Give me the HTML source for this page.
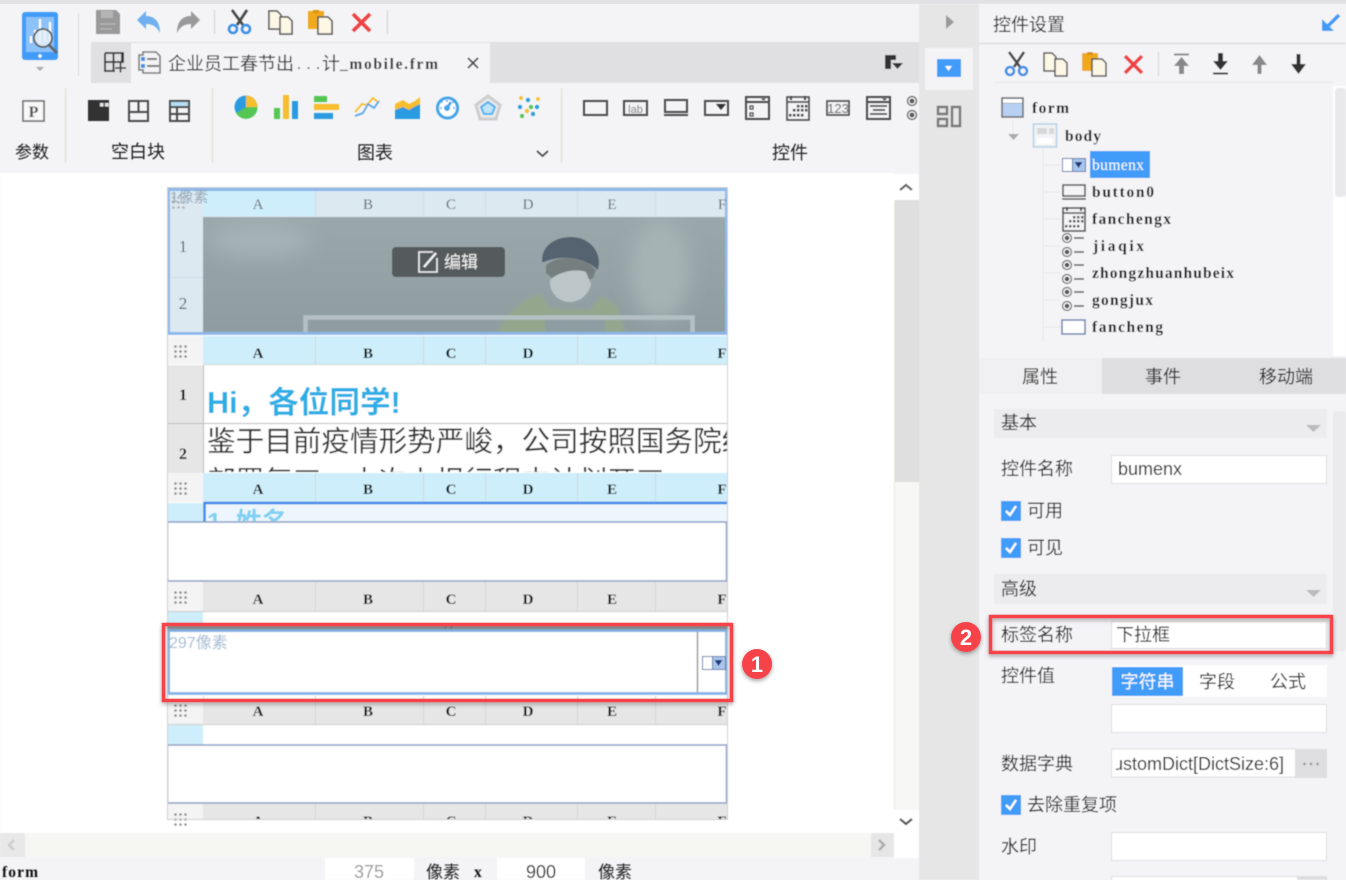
<!DOCTYPE html>
<html><head><meta charset="utf-8"><title>控件设置</title>
<style>
html,body{margin:0;padding:0;width:1346px;height:880px;overflow:hidden;background:#f4f4f7}
svg{display:block;position:absolute;left:0;top:0}
text{font-family:"Liberation Sans","Noto Sans CJK SC",sans-serif;fill:#222;font-size:16px}
.m{font-family:"Liberation Serif","Noto Sans CJK SC",serif;font-size:15.500px;fill:#111;font-weight:bold}
.h{font-family:"Liberation Serif",serif;font-size:15px;font-weight:bold;fill:#111;text-anchor:middle}
.c{text-anchor:middle}
.ic{fill:none;stroke:#4c4c4c;stroke-width:2}
</style></head><body>
<svg width="1346" height="880" viewBox="0 0 1346 880" xmlns="http://www.w3.org/2000/svg">
<defs>
<filter id="sh" x="-10%" y="-20%" width="120%" height="140%"><feDropShadow dx="0" dy="2" stdDeviation="2" flood-color="#000" flood-opacity=".35"/></filter>
<filter id="b" x="-5%" y="-5%" width="110%" height="110%"><feGaussianBlur stdDeviation=".45"/></filter>
<filter id="b2" x="-20%" y="-20%" width="140%" height="140%"><feGaussianBlur stdDeviation="1.6"/></filter>
<filter id="b3" x="-50%" y="-50%" width="200%" height="200%"><feGaussianBlur stdDeviation="9"/></filter>
<linearGradient id="fog" x1="0" y1="0" x2="0" y2="1"><stop offset="0" stop-color="#9aa8ac"/><stop offset="1" stop-color="#8f9da1"/></linearGradient>
<clipPath id="c1"><rect x="203" y="217" width="523" height="116"/></clipPath>
<clipPath id="c2"><rect x="203" y="365" width="525" height="107"/></clipPath>
<clipPath id="c3"><rect x="205" y="504" width="523" height="17"/></clipPath>
<clipPath id="c4"><rect x="167" y="805" width="561" height="15"/></clipPath>
<clipPath id="c5"><rect x="1116" y="750" width="178" height="28"/></clipPath>
<clipPath id="c6"><rect x="167" y="187" width="561" height="640"/></clipPath>
<g id="sc"><path d="M10 15L20 0M16 15L5 0" stroke="#454545" stroke-width="2.6" fill="none"/><circle cx="6" cy="19" r="4" fill="none" stroke="#3d8fe6" stroke-width="2.6"/><circle cx="19" cy="19" r="4" fill="none" stroke="#3d8fe6" stroke-width="2.6"/></g>
<g id="cp"><path d="M1 1h8l4 4v14H1z" fill="#fdf7e6" stroke="#555" stroke-width="1.5"/><path d="M12 7h8l4 4v13H12z" fill="#fdf7e6" stroke="#555" stroke-width="1.5"/></g>
<g id="pa"><rect x="0" y="1" width="16" height="18" fill="#f0a81e"/><rect x="5" y="0" width="6" height="3" fill="#d9920c"/><path d="M10 7h10l4 4v13H10z" fill="#fdf7e6" stroke="#555" stroke-width="1.5"/></g>
<path id="xx" d="M1 1L18 18M18 1L1 18" stroke="#ee4343" stroke-width="3.6" fill="none"/>
<g id="rd"><circle cx="5" cy="5" r="4.5" fill="none" stroke="#666" stroke-width="1.2"/><circle cx="5" cy="5" r="2.3" fill="#555"/></g>
<g id="ck"><rect width="20" height="20" fill="#3f9bf9"/><path d="M5 10l4 4 6-9" stroke="#fff" stroke-width="2.4" fill="none"/></g>
<g id="dd"><rect x=".5" y=".5" width="23" height="13" fill="#fff" stroke="#5a76a8"/><rect x="10" y="1" width="13" height="12" fill="#a9c6ec"/><path d="M10.5 1v12" stroke="#5a76a8"/><path d="M12.5 4h8l-4 6z" fill="#1e3a7c"/></g>
<g id="gp"><g fill="#8a8a8a"><circle cx="1.5" cy="1.5" r="1.3"/><circle cx="6.5" cy="1.5" r="1.3"/><circle cx="11.5" cy="1.5" r="1.3"/><circle cx="1.5" cy="6.5" r="1.3"/><circle cx="6.5" cy="6.5" r="1.3"/><circle cx="11.5" cy="6.5" r="1.3"/><circle cx="1.5" cy="11.5" r="1.3"/><circle cx="6.5" cy="11.5" r="1.3"/><circle cx="11.5" cy="11.5" r="1.3"/></g></g>
<g id="cal"><rect x="1" y="1" width="22" height="23" fill="none" stroke="#4c4c4c" stroke-width="1.6"/><path d="M1 6h22" stroke="#4c4c4c" stroke-width="1.6"/><path d="M5 0v4M19 0v4" stroke="#4c4c4c" stroke-width="2"/><g fill="#4c4c4c"><rect x="11" y="9" width="2.4" height="2.4"/><rect x="15" y="9" width="2.4" height="2.4"/><rect x="19" y="9" width="2.4" height="2.4"/><rect x="7" y="13" width="2.4" height="2.4"/><rect x="11" y="13" width="2.4" height="2.4"/><rect x="15" y="13" width="2.4" height="2.4"/><rect x="19" y="13" width="2.4" height="2.4"/><rect x="3" y="18" width="2.4" height="2.4"/><rect x="7" y="18" width="2.4" height="2.4"/><rect x="11" y="18" width="2.4" height="2.4"/><rect x="15" y="18" width="2.4" height="2.4"/></g></g>
</defs>

<!-- base -->
<rect width="1346" height="880" fill="#f4f4f7"/>
<rect width="1346" height="4" fill="#e2e2e4"/>

<g filter="url(#b)">
<!-- tab bar -->
<rect x="91" y="42" width="828" height="41" fill="#e0e0e2"/>
<rect x="131" y="43" width="359" height="40" fill="#f4f4f7"/>
<path d="M105 53h18v10M105 53v18h10M113.500 53v18M105 62h18M122 53v9" fill="none" stroke="#333" stroke-width="1.8"/>
<path d="M115 68h11M120.500 62.500v10" fill="none" stroke="#333" stroke-width="1.6"/>
<path d="M143 52h13l4 4v17h-17v-3h-4V55h4z" fill="#f4f4f7" stroke="#777" stroke-width="1.6"/><rect x="141" y="57" width="4" height="4" fill="#3f8fe6"/><rect x="141" y="64" width="4" height="4" fill="#3f8fe6"/><path d="M147 59h10M147 66h12" stroke="#777" stroke-width="2"/>
<text x="168" y="70" style="font-size:18px;fill:#333">企业员工春节出</text>
<text x="297" y="69" class="m" textLength="23" lengthAdjust="spacing" style="font-weight:normal;fill:#333">...</text>
<text x="322" y="70" style="font-size:18px;fill:#333">计</text>
<text x="340" y="69" class="m" textLength="98" lengthAdjust="spacing" style="fill:#333">_mobile.frm</text>
<path d="M468 58l10 10M478 58l-10 10" stroke="#444" stroke-width="1.8"/>
<path d="M885 55h11v5h-5v9h-6z" fill="#333"/><path d="M892 63h11l-5.500 6z" fill="#333"/>

<!-- logo -->
<rect x="22" y="12" width="36" height="48" rx="3" fill="#3f9bf9"/>
<rect x="26" y="17" width="28" height="35" fill="#8cc2f8"/>
<path d="M31 36v7M35 30v13M40 19v24M45 28v14M50 22v20" stroke="#fff" stroke-width="2.200"/>
<circle cx="40" cy="56" r="1.8" fill="#fff"/>
<circle cx="43" cy="38" r="9" fill="#e8f0f8" fill-opacity=".8" stroke="#555" stroke-width="1.8"/>
<path d="M49 45l8 8" stroke="#666" stroke-width="3"/>
<path d="M36 67h8l-4 4z" fill="#aaa"/>
<path d="M78.500 13v63" stroke="#dcdcd8"/>

<!-- quick toolbar -->
<path d="M96 10h20l4 4v20H96z" fill="#999"/><rect x="101" y="11" width="12" height="7" fill="#b5b5b5"/><path d="M100 24h16M100 29h12" stroke="#b5b5b5" stroke-width="1.5"/>
<path d="M137 20l9-9v5c9 0 14 6 14 17-3-6-7-9-14-9v5z" fill="#6fb0ee"/>
<path d="M200 20l-9-9v5c-9 0-14 6-14 17 3-6 7-9 14-9v5z" fill="#999"/>
<path d="M214.500 10v24M387.500 10v24" stroke="#d8d8d8" stroke-width="1.4"/>
<use href="#sc" x="227" y="10"/><use href="#cp" x="268" y="10"/><use href="#pa" x="308" y="10"/><use href="#xx" x="352" y="13"/>

<!-- ribbon -->
<rect x="23" y="101" width="21" height="20" fill="#f8f8f8" stroke="#666" stroke-width="1.5"/>
<text x="33.500" y="117" class="c" style="font-family:'Liberation Serif',serif;font-weight:bold;font-size:16px;fill:#555">P</text>
<path d="M65.500 88v75M212.500 88v75M561.500 88v75" stroke="#e8e6dc" stroke-width="2"/>
<rect x="88" y="100" width="21" height="21" fill="#333"/><rect x="100" y="103" width="3.500" height="3.500" fill="#e4e4e4"/><rect x="105" y="103" width="3.500" height="3.500" fill="#e4e4e4"/>
<path d="M129 101h19v20h-19zM129 112h19M138.500 101v11" class="ic"/>
<rect x="170" y="101" width="19" height="6" fill="#b5dff5"/><path d="M170 101h19v20h-19zM170 107h19M177 107v14M170 114h19" class="ic"/>
<text x="32" y="158" class="c" style="font-size:17px">参数</text>
<text x="138" y="158" class="c" style="font-size:18px">空白块</text>
<text x="375" y="159" class="c" style="font-size:18px">图表</text>
<text x="790" y="159" class="c" style="font-size:18px">控件</text>
<path d="M537 151l5.500 5 5.500-5" fill="none" stroke="#444" stroke-width="1.6"/>

<!-- charts -->
<circle cx="246" cy="107" r="11.500" fill="#2a9be0"/>
<path d="M246 107V95.500A11.500 11.500 0 0 1 257.500 107z" fill="#f8bd2d"/>
<path d="M246 107h11.500A11.500 11.500 0 0 1 236 113z" fill="#53c653"/>
<rect x="274" y="108" width="6" height="11" fill="#53c653"/><rect x="283" y="95" width="6" height="24" fill="#f8bd2d"/><rect x="292" y="101" width="6" height="18" fill="#2a9be0"/>
<rect x="314" y="96" width="13" height="6" fill="#53c653"/><rect x="314" y="104" width="25" height="6" fill="#f8bd2d"/><rect x="314" y="113" width="19" height="6" fill="#2a9be0"/>
<path d="M355 112l7-8 5 1 6-7 5 4" fill="none" stroke="#f8bd2d" stroke-width="1.8"/><path d="M355 116l8-3 5-9 6 4 5-7" fill="none" stroke="#5aa8e8" stroke-width="1.8"/>
<path d="M395 104l8-4 6 4 6-3 5-4v22h-25z" fill="#f8bd2d"/><path d="M395 110l8-3 6 3 5-3 6-3v15h-25z" fill="#2a9be0"/>
<circle cx="447.500" cy="108" r="10" fill="#fff" stroke="#3fa4ea" stroke-width="3"/><path d="M447 108l4-6" stroke="#3fa4ea" stroke-width="2.800"/><circle cx="447" cy="108" r="3" fill="#3fa4ea"/><path d="M441 101l1.500 1.500M454 101l-1.500 1.500M440 108h2M455 108h-2M447 100v2" stroke="#3fa4ea" stroke-width="1.600"/>
<path d="M488 96l12 9-4 14h-16l-4-14z" fill="#ececee" stroke="#cdcdcd" stroke-width="3"/><path d="M488 102l7 5-3 7h-8l-3-7z" fill="#bfe3f8" stroke="#4fb0ea" stroke-width="2"/>
<g><circle cx="521" cy="98" r="1.900" fill="#f8bd2d"/><circle cx="528" cy="100" r="2.100" fill="#2a9be0"/><circle cx="538" cy="99" r="1.900" fill="#f8bd2d"/><circle cx="520" cy="107" r="2.100" fill="#2a9be0"/><circle cx="531" cy="107" r="2.100" fill="#53c653"/><circle cx="537" cy="107" r="2.100" fill="#2a9be0"/><circle cx="527" cy="111" r="2.100" fill="#f8bd2d"/><circle cx="533" cy="114" r="2.100" fill="#2a9be0"/><circle cx="522" cy="116" r="2.100" fill="#53c653"/></g>

<!-- widgets -->
<rect x="584" y="101" width="23" height="14" class="ic"/>
<rect x="624" y="101" width="23" height="14" class="ic"/><text x="635.500" y="113" class="c" style="font-size:11px;fill:#888">lab</text>
<path d="M665 100h22v12h-22zM664 115h24" class="ic"/>
<rect x="705" y="101" width="23" height="14" class="ic"/><path d="M716 104h10l-5 6z" fill="#333"/>
<rect x="746" y="97" width="23" height="22" class="ic"/><path d="M746 102h23" class="ic"/><path d="M761 98.500h5l-2.500 2z" fill="#333"/><rect x="750" y="106" width="3" height="3" class="ic" style="stroke-width:1.2"/><rect x="750" y="113" width="3" height="3" class="ic" style="stroke-width:1.2"/>
<use href="#cal" x="786" y="96"/>
<rect x="827" y="101" width="22" height="14" class="ic" style="stroke-width:1.6"/><text x="838" y="113" class="c" style="font-size:13px;fill:#777">123</text>
<rect x="867" y="97" width="23" height="22" class="ic"/><path d="M867 102h23" class="ic"/><path d="M882 98.500h5l-2.500 2z" fill="#333"/><path d="M870 106h17M873 110h12M870 114h17" stroke="#4c4c4c" stroke-width="1.5"/>
<use href="#rd" x="907" y="96"/><use href="#rd" x="907" y="110"/>

<!-- canvas -->
<rect x="0" y="173" width="894" height="660" fill="#fff"/>
<rect x="894" y="174" width="25" height="26" fill="#fff"/>
<path d="M900 190l6-5 6 5" fill="none" stroke="#666" stroke-width="2.400"/>
<rect x="894" y="200" width="25" height="282" fill="#dfdfdf"/>
<rect x="894" y="482" width="25" height="328" fill="#f7f7f5"/>
<rect x="894" y="810" width="25" height="48" fill="#fff"/>
<path d="M900 819l6 5 6-5" fill="none" stroke="#555" stroke-width="2.400"/>
<path d="M894.500 200v610" stroke="#e9e7dc"/>
<rect x="0" y="833" width="871" height="24" fill="#f6f6f3"/><rect x="0" y="833" width="25" height="24" fill="#e8e8e8"/><rect x="871" y="833" width="23" height="24" fill="#e6e6e6"/>
<path d="M14 840l-5 5 5 5" fill="none" stroke="#ccc" stroke-width="2.400"/><path d="M879 840l5 5-5 5" fill="none" stroke="#aaa" stroke-width="2.400"/>

<!-- status bar -->
<text x="2" y="877" class="m" textLength="36" lengthAdjust="spacing">form</text>
<rect x="325" y="858" width="89" height="22" fill="#fff"/><rect x="497" y="858" width="88" height="22" fill="#fff"/>
<text x="369" y="878" class="c" style="fill:#999;font-size:18px">375</text>
<text x="541" y="878" class="c" style="fill:#222;font-size:18px">900</text>
<text x="426" y="878" style="font-size:17px">像素</text><text x="474" y="877" class="m">x</text>
<text x="598" y="878" style="font-size:17px">像素</text>

<!-- form -->
<g clip-path="url(#c6)">
<rect x="167" y="187" width="561" height="633" fill="#fff"/>
<!-- section 1 -->
<rect x="167" y="187" width="561" height="148" fill="#dce9f1"/>
<rect x="203" y="191" width="112" height="25" fill="#cfeefb"/>
<path d="M315.500 191v25M423.500 191v25M485.500 191v25M577.500 191v25M655.500 191v25M170 277.500h33" stroke="#cfdde6"/>
<rect x="203" y="217" width="524" height="116" fill="url(#fog)"/>
<g clip-path="url(#c1)">
<ellipse cx="660" cy="270" rx="30" ry="50" fill="#a6b3b4" filter="url(#b3)"/>
<ellipse cx="260" cy="240" rx="50" ry="18" fill="#a4b2b5" filter="url(#b3)"/>
<path d="M497 333c6-12 14-24 30-34l14-5 8 14 42 2 10-14 16 10 8 27z" fill="#94a78d" filter="url(#b2)"/>
<path d="M545 318h60v15h-60z" fill="#8d9da2" filter="url(#b2)"/>
<path d="M542 262c-1-16 13-25 29-25 16 0 28 11 28 26l-1 7c-16-14-37-15-54-8z" fill="#55646f"/>
<path d="M546 265c12-10 36-10 50 5l-3 8-5 2-36-2-6-5z" fill="#747f80"/>
<path d="M550 280c8-8 26-12 36-8l5 12c-2 11-12 18-21 18-13 0-21-11-20-22z" fill="#bcc6c8"/>
<path d="M303 333v0M305.500 333v-15.500h387v15.500" fill="none" stroke="#b4c0c2" stroke-width="4.500"/>
</g>
<rect x="168.500" y="189.500" width="558" height="144" fill="none" stroke="#8ab8ea" stroke-width="3"/>
<text x="258 368 451 528 612 722" y="209" class="h" style="fill:#667;font-weight:normal">ABCDEF</text>
<use href="#gp" x="172" y="196" opacity=".6"/>
<text x="170" y="202" style="font-size:15px;fill:#93a6b8">1像素</text>
<text x="183" y="252" class="h" style="font-weight:normal;fill:#566;font-size:17px">1</text>
<text x="183" y="309" class="h" style="font-weight:normal;fill:#566;font-size:17px">2</text>
<!-- 编辑 -->
<rect x="392" y="247" width="113" height="30" rx="4" fill="#555a5c"/>
<path d="M433 252h-14v20h18v-14" fill="none" stroke="#f2f2f2" stroke-width="1.600"/><path d="M424 267l12-14" stroke="#f2f2f2" stroke-width="2.400"/>
<text x="444" y="268" style="font-size:17px;fill:#f2f2f2">编辑</text>

<!-- section 2 -->
<rect x="167" y="336" width="561" height="28" fill="#cfeefb"/>
<rect x="167" y="336" width="36" height="28" fill="#f4f4f5"/>
<path d="M203 364.500h525M315.500 336v28M423.500 336v28M485.500 336v28M577.500 336v28M655.500 336v28" stroke="#cfd8dc"/>
<use href="#gp" x="174" y="345"/>
<text x="258 368 451 528 612 722" y="358" class="h">ABCDEF</text>
<rect x="167" y="365" width="36" height="108" fill="#e6e6e6"/>
<path d="M203.500 365v108" stroke="#bbb"/><path d="M167 423.500h561" stroke="#bbb"/>
<text x="183" y="400" class="h" style="font-size:16px">1</text><text x="183" y="459" class="h" style="font-size:16px">2</text>
<g clip-path="url(#c2)">
<text x="207" y="413" style="font-size:30.600px;font-weight:bold;fill:#29aee6">Hi，各位同学!</text>
<text x="207" y="451" style="font-size:28.600px;fill:#333">鉴于目前疫情形势严峻，公司按照国务院统</text>
<text x="207" y="491" style="font-size:28.600px;fill:#333">部署复工，本次上报行程内计划开工</text>
</g>

<!-- section 3 -->
<rect x="167" y="473" width="561" height="29" fill="#cfeefb"/>
<rect x="167" y="473" width="36" height="29" fill="#f4f4f5"/>
<path d="M315.500 473v29M423.500 473v29M485.500 473v29M577.500 473v29M655.500 473v29" stroke="#cfd8dc"/>
<use href="#gp" x="174" y="482"/>
<text x="258 368 451 528 612 722" y="494" class="h">ABCDEF</text>
<rect x="167" y="503" width="36" height="19" fill="#cfeefb"/>
<rect x="204" y="503" width="524" height="19" fill="#eef6fd"/>
<path d="M204.500 522v-19h524" fill="none" stroke="#3e86e8" stroke-width="2.500"/>
<g clip-path="url(#c3)"><text x="207" y="531" style="font-size:26px;font-weight:bold;fill:#7fd0f2">1. 姓名</text></g>
<rect x="167.500" y="522" width="559" height="59" fill="#fff" stroke="#8fa3c7" stroke-width="1.600"/>

<!-- section 4 -->
<rect x="167" y="582" width="561" height="29" fill="#e6e6e6"/>
<rect x="167" y="582" width="36" height="29" fill="#f4f4f5"/>
<path d="M167 611.500h561" stroke="#ccc"/>
<path d="M315.500 582v29M423.500 582v29M485.500 582v29M577.500 582v29M655.500 582v29" stroke="#d6d6d6"/>
<use href="#gp" x="174" y="591"/>
<text x="258 368 451 528 612 722" y="604" class="h">ABCDEF</text>
<rect x="167" y="612" width="36" height="14" fill="#cfeefb"/>
<rect x="167" y="625" width="561" height="5" fill="#a3a3a3"/>
<path d="M445.500 625v5M451.500 625v5" stroke="#777"/>
<rect x="168.500" y="630.500" width="558" height="63" fill="#fff" stroke="#86b7e8" stroke-width="3"/>
<path d="M697.500 632v60" stroke="#999" stroke-width="1.500"/>
<use href="#dd" x="702" y="656"/>
<text x="169" y="648" style="font-size:16px;fill:#a3bad6">297像素</text>

<!-- section 5 -->
<rect x="167" y="696" width="561" height="5" fill="#fff"/>
<path d="M203.500 696v5M315.500 696v5M423.500 696v5M485.500 696v5M577.500 696v5M655.500 696v5" stroke="#d6d6d6"/>
<rect x="167" y="701" width="561" height="23" fill="#e6e6e6"/>
<rect x="167" y="701" width="36" height="23" fill="#f4f4f5"/>
<path d="M315.500 701v23M423.500 701v23M485.500 701v23M577.500 701v23M655.500 701v23" stroke="#d6d6d6"/>
<path d="M167 724.500h561" stroke="#ccc"/>
<use href="#gp" x="174" y="704"/>
<text x="258 368 451 528 612 722" y="716" class="h">ABCDEF</text>
<rect x="167" y="725" width="36" height="19" fill="#cfeefb"/>
<rect x="167.500" y="745" width="559" height="58" fill="#fff" stroke="#8fa3c7" stroke-width="1.600"/>

<!-- section 6 -->
<rect x="167" y="804" width="561" height="16" fill="#e6e6e6"/>
<rect x="167" y="804" width="36" height="16" fill="#f4f4f5"/>
<path d="M315.500 804v16M423.500 804v16M485.500 804v16M577.500 804v16M655.500 804v16" stroke="#d6d6d6"/>
<use href="#gp" x="174" y="813"/>
<g clip-path="url(#c4)"><text x="258 368 451 528 612 722" y="826" class="h">ABCDEF</text></g>
</g>
<rect x="167.500" y="187.500" width="560" height="632" fill="none" stroke="#cfcfcf"/>

<!-- sidebar -->
<rect x="919" y="4" width="60" height="876" fill="#e6e6e6"/>
<path d="M946 15l8 7-8 7z" fill="#999"/>
<rect x="925" y="48" width="48" height="42" fill="#f4f4f7"/>
<rect x="937" y="59" width="24" height="18" fill="#3f9bf9"/><path d="M945 66h7l-3.500 5z" fill="#fff"/>
<path d="M938 107h9v7h-9zM938 119h9v7h-9zM952 107h8v19h-8z" fill="none" stroke="#777" stroke-width="2.400"/>

<!-- right panel -->
<rect x="979" y="4" width="367" height="876" fill="#f4f4f7"/>
<text x="993" y="31" style="font-size:18px">控件设置</text>
<path d="M979 43.500h367" stroke="#dcdcde" stroke-width="1.500"/>
<path d="M1339 15l-12 12" stroke="#3f9bf9" stroke-width="3.600"/><path d="M1322 19v12h12z" fill="#3f9bf9"/>
<use href="#sc" x="1004" y="52"/><use href="#cp" x="1043" y="52"/><use href="#pa" x="1082" y="52"/><use href="#xx" x="1124" y="55"/>
<path d="M1158.500 52v24" stroke="#ddd" stroke-width="1.400"/>
<path d="M1174 54.500h15" stroke="#888" stroke-width="2"/><path d="M1174 66l7.500-9 7.500 9h-5v8h-5v-8z" fill="#888"/>
<path d="M1213 73.500h15" stroke="#333" stroke-width="2"/><path d="M1213 61h5v-8h5v8h5l-7.500 9z" fill="#333"/>
<path d="M1252 65l7.500-10 7.500 10h-5.500v9h-4v-9z" fill="#888"/>
<path d="M1291 64h5.500v-10h4v10h5.500l-7.500 10z" fill="#333"/>
<path d="M994 82.500h339" stroke="#e4e4e6"/>
<rect x="1333" y="86" width="13" height="270" fill="#fff"/>
<rect x="1335" y="88" width="11" height="109" rx="3" fill="#e9e9eb"/>

<!-- tree -->
<path d="M1013 120v14M1043 150v192M1044 165h17M1044 192h17M1044 219h17M1044 246h17M1044 273h17M1044 300h17M1044 327h17" stroke="#e6e6e8" fill="none"/>
<rect x="1002" y="98" width="21" height="19" fill="#b8d1f3" stroke="#666" stroke-width="1.500"/><path d="M1002 103h21" stroke="#666"/><rect x="1003" y="99" width="19" height="4" fill="#fff"/>
<path d="M1008 134h11l-5.500 6z" fill="#aaa"/>
<rect x="1033.500" y="124" width="23" height="23" fill="#f1f3f6" stroke="#b7d3e6" stroke-width="1.600"/><rect x="1037" y="128" width="10" height="6" fill="#d8d8d8"/><rect x="1049" y="128" width="5" height="6" fill="#d8d8d8"/><rect x="1037" y="138" width="16" height="6" fill="#fff"/>
<rect x="1090" y="151" width="60" height="27" fill="#3f9bf9"/>
<use href="#dd" x="1062" y="158"/>
<path d="M1063 185h22v11h-22zM1062 199h24" fill="none" stroke="#4c4c4c" stroke-width="1.500"/>
<use href="#cal" x="1062" y="207"/>
<use href="#rd" x="1062" y="233"/><use href="#rd" x="1062" y="247"/><use href="#rd" x="1062" y="260"/><use href="#rd" x="1062" y="274"/><use href="#rd" x="1062" y="287"/><use href="#rd" x="1062" y="301"/>
<path d="M1074 238h10M1074 252h10M1074 265h10M1074 279h10M1074 292h10M1074 306h10" stroke="#555" stroke-width="1.500"/>
<rect x="1062" y="320" width="23" height="14" fill="#fff" stroke="#5a76a8" stroke-width="1.400"/>
<text x="1032" y="113" class="m" textLength="37" lengthAdjust="spacing">form</text>
<text x="1065" y="141" class="m" textLength="36" lengthAdjust="spacing">body</text>
<text x="1092" y="170" class="m" textLength="52" lengthAdjust="spacing" style="fill:#fff;font-weight:normal">bumenx</text>
<text x="1092" y="197" class="m" textLength="62" lengthAdjust="spacing">button0</text>
<text x="1092" y="224" class="m" textLength="79" lengthAdjust="spacing">fanchengx</text>
<text x="1093" y="251" class="m" textLength="51" lengthAdjust="spacing">jiaqix</text>
<text x="1092" y="278" class="m" textLength="142" lengthAdjust="spacing">zhongzhuanhubeix</text>
<text x="1092" y="305" class="m" textLength="61" lengthAdjust="spacing">gongjux</text>
<text x="1092" y="332" class="m" textLength="71" lengthAdjust="spacing">fancheng</text>

<!-- tabs -->
<rect x="979" y="358" width="123" height="36" fill="#f0f0f2"/>
<rect x="1102" y="358" width="244" height="36" fill="#dedee0"/>
<text x="1040" y="383" class="c" style="font-size:18px">属性</text>
<text x="1163" y="383" class="c" style="font-size:18px">事件</text>
<text x="1286" y="383" class="c" style="font-size:18px">移动端</text>

<!-- props -->
<rect x="1333" y="411" width="13" height="240" rx="3" fill="#ebebed"/>
<rect x="994" y="409" width="333" height="29" fill="#ececee"/>
<text x="1001" y="429" style="font-size:18px">基本</text><path d="M1306 425h15l-7.500 7z" fill="#bbb"/>
<text x="1001" y="475" style="font-size:18px">控件名称</text>
<rect x="1111.500" y="455.500" width="215" height="28" fill="#fff" stroke="#ddd"/>
<text x="1118" y="475" style="font-size:18px;fill:#222">bumenx</text>
<use href="#ck" x="1001" y="501"/><text x="1027" y="517" style="font-size:18px">可用</text>
<use href="#ck" x="1001" y="538"/><text x="1027" y="554" style="font-size:18px">可见</text>
<rect x="994" y="574" width="333" height="30" fill="#ececee"/>
<text x="1001" y="595" style="font-size:18px">高级</text><path d="M1306 590h15l-7.500 7z" fill="#bbb"/>
<text x="1001" y="641" style="font-size:18px">标签名称</text>
<rect x="1111.500" y="621.500" width="215" height="27" fill="#fff" stroke="#ddd"/>
<text x="1116" y="641" style="font-size:18px">下拉框</text>
<text x="1001" y="682" style="font-size:18px">控件值</text>
<rect x="1112" y="665" width="215" height="32" fill="#fff"/>
<rect x="1112" y="667" width="71" height="29" fill="#3f9bf9"/>
<text x="1147.500" y="688" class="c" style="font-size:18px;fill:#fff">字符串</text>
<text x="1217" y="688" class="c" style="font-size:18px">字段</text>
<text x="1288" y="688" class="c" style="font-size:18px">公式</text>
<rect x="1111.500" y="704.500" width="215" height="28" fill="#fff" stroke="#ddd"/>
<text x="1001" y="770" style="font-size:18px">数据字典</text>
<rect x="1111.500" y="749" width="184" height="28" fill="#fff" stroke="#ddd"/>
<rect x="1295" y="749" width="32" height="29" fill="#dedee0"/>
<g fill="#888"><circle cx="1304.500" cy="764" r="1.200"/><circle cx="1311" cy="764" r="1.200"/><circle cx="1317.500" cy="764" r="1.200"/></g>
<g clip-path="url(#c5)"><text x="1113" y="770" style="font-size:18px">ustomDict[DictSize:6]</text></g>
<use href="#ck" x="1001" y="795"/><text x="1027" y="811" style="font-size:18px">去除重复项</text>
<text x="1001" y="853" style="font-size:18px">水印</text>
<rect x="1111.500" y="832.500" width="215" height="28" fill="#fff" stroke="#ddd"/>
<rect x="1111.500" y="876.500" width="215" height="8" fill="#fff" stroke="#ddd"/>
<rect x="1297" y="877" width="30" height="3" fill="#dedee0"/>
</g>

<!-- annotations -->
<rect x="163.500" y="624.500" width="568" height="76" fill="none" stroke="#f64349" stroke-width="3.500" filter="url(#sh)"/>
<rect x="990.500" y="616.500" width="341" height="36" fill="none" stroke="#f64349" stroke-width="3.500" filter="url(#sh)"/>
<circle cx="757" cy="664" r="15" fill="#f64349" filter="url(#sh)"/>
<text x="757" y="672" class="c" style="font-size:22px;font-weight:bold;fill:#fff">1</text>
<circle cx="966" cy="637" r="15" fill="#f64349" filter="url(#sh)"/>
<text x="966" y="645" class="c" style="font-size:22px;font-weight:bold;fill:#fff">2</text>
</svg>
</body></html>
